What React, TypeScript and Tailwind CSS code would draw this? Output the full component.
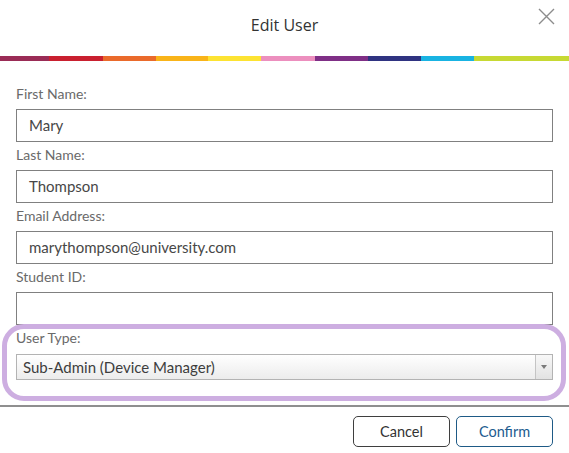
import React from "react";

const bar = [
  { w: "w-[49px]", c: "bg-[#9a2c56]" },
  { w: "w-[54px]", c: "bg-[#c9202f]" },
  { w: "w-[53px]", c: "bg-[#ea6a2b]" },
  { w: "w-[52px]", c: "bg-[#f9b419]" },
  { w: "w-[53px]", c: "bg-[#fde332]" },
  { w: "w-[54px]", c: "bg-[#ec8fbe]" },
  { w: "w-[53px]", c: "bg-[#7f2f86]" },
  { w: "w-[53px]", c: "bg-[#2f3381]" },
  { w: "w-[53px]", c: "bg-[#19b3e2]" },
  { w: "flex-1", c: "bg-[#c7d933]" },
];

function Field({ label, value }: { label: string; value: string }) {
  return (
    <div className="flex flex-col">
      <label className="text-[14px] leading-[20px] text-[#6a6a6a] mb-[5px]">{label}</label>
      <div className="h-[33px] border border-[#808080] flex items-center pl-[12px] text-[15px] text-[#474747]">
        {value}
      </div>
    </div>
  );
}

export default function App() {
  return (
    <div
      className="w-[569px] h-[453px] bg-white overflow-hidden flex flex-col"
      style={{ fontFamily: "Lato, 'Open Sans', sans-serif" }}
    >
      <div className="relative h-[56px] flex justify-center pt-[15px]">
        <div
          className="text-[16px] leading-[20px] text-[#333]"
          style={{ fontFamily: "'Open Sans', sans-serif" }}
        >
          Edit User
        </div>
        <svg
          className="absolute left-[538px] top-[8px]"
          width="17"
          height="17"
          viewBox="0 0 17 17"
        >
          <path d="M1 1 L16 16 M16 1 L1 16" stroke="#8c8c8c" strokeWidth="1.4" fill="none" />
        </svg>
      </div>
      <div className="flex h-[5px]">
        {bar.map((b, i) => (
          <div key={i} className={`${b.w} ${b.c} h-full`} />
        ))}
      </div>
      <div className="flex flex-col gap-[3px] px-[16px] pt-[23px]">
        <Field label="First Name:" value="Mary" />
        <Field label="Last Name:" value="Thompson" />
        <Field label="Email Address:" value="marythompson@university.com" />
        <Field label="Student ID:" value="" />
        <div className="relative flex flex-col">
          <div className="absolute -left-[14px] -right-[13px] -top-[4px] -bottom-[21px] border-[5px] border-[#cdaee1] rounded-[22px]" />
          <label className="text-[14px] leading-[20px] text-[#6a6a6a] mb-[6px]">User Type:</label>
          <div className="h-[26px] border border-[#b3b3b3] flex bg-gradient-to-b from-white to-[#ececec]">
            <div className="flex-1 flex items-center pl-[6px] text-[15px] text-[#3d3d3d]">
              Sub-Admin (Device Manager)
            </div>
            <div className="w-[17px] border-l border-[#c4c4c4] flex items-center justify-center bg-gradient-to-b from-[#f8f8f8] to-[#e2e2e2]">
              <svg width="6" height="4" viewBox="0 0 6 4">
                <path d="M0 0 L6 0 L3 4 Z" fill="#7a7a7a" />
              </svg>
            </div>
          </div>
        </div>
      </div>
      <div className="mt-[25px] h-[2px] bg-[#8f8f8f]" />
      <div className="flex justify-end gap-[6px] pr-[16px] pt-[9px]">
        <button className="w-[97px] h-[31px] border-[1.5px] border-[#3f3f3f] rounded-[5px] text-[14.5px] text-[#333] flex items-center justify-center">
          Cancel
        </button>
        <button className="w-[97px] h-[31px] border-[1.5px] border-[#1e5a86] rounded-[5px] text-[14.5px] text-[#1d5c8f] flex items-center justify-center">
          Confirm
        </button>
      </div>
    </div>
  );
}
